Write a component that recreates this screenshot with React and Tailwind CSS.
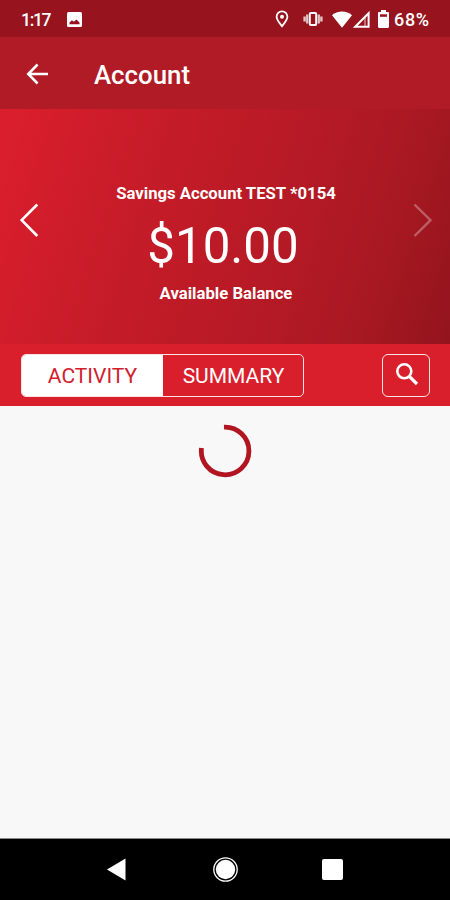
import React, { useState } from "react";

const StatusBar = () => (
  <div className="h-[37px] bg-[#97141e] flex items-center text-white text-[18px] font-medium">
    <span className="w-[32px] ml-[21px] mt-[3px] whitespace-nowrap text-[17.5px] tracking-[-1.3px]">1:17</span>
    <svg className="ml-[14px] mt-[2px]" width="15" height="15" viewBox="0 0 15 15">
      <rect width="15" height="15" rx="1.5" fill="#fff" />
      <path d="M2.5 12.2v-1.8l2.4-2.2 2 1.6 2.6-2.2 3 2.8v1.8z" fill="#97141e" />
    </svg>
    <svg className="ml-[193px] mt-[1px]" width="14" height="18" viewBox="0 0 14 18" fill="none" stroke="#fff">
      <path d="M7 16.2C4 12.5 1.6 9.8 1.6 6.8a5.4 5.4 0 0 1 10.8 0C12.4 9.8 10 12.5 7 16.2z" strokeWidth="1.8" />
      <circle cx="7" cy="6.7" r="2" fill="#fff" stroke="none" />
    </svg>
    <svg className="ml-[14px] mt-[1px]" width="20" height="16" viewBox="0 0 20 16" fill="none" stroke="#fff">
      <rect x="6.8" y="1.9" width="6.4" height="12.2" rx="1" strokeWidth="2" />
      <path d="M4.2 3.5v9M15.8 3.5v9" strokeWidth="2.2" opacity="0.75" />
      <path d="M1.6 5.5v5M18.4 5.5v5" strokeWidth="2.4" opacity="0.75" />
    </svg>
    <svg className="ml-[9px] mt-[1px]" width="20" height="17" viewBox="0 0 20 17">
      <path d="M0 4.2C2.8 1.7 6.2.5 10 .5s7.2 1.2 10 3.7L10 16.8z" fill="#fff" />
    </svg>
    <svg className="ml-[1px] mt-[1px]" width="17" height="17" viewBox="0 0 17 17" fill="none" stroke="#fff">
      <path d="M2.2 15.7L15.6 2.2v13.5z" strokeWidth="2" />
      <path d="M12 6.5v9" strokeWidth="0.8" />
    </svg>
    <svg className="ml-[8px] mt-[1px]" width="11" height="18" viewBox="0 0 11 18">
      <path d="M3 0h5v2h1.8c.7 0 1.2.5 1.2 1.2v13.6c0 .7-.5 1.2-1.2 1.2H1.2C.5 18 0 17.5 0 16.8V3.2C0 2.5.5 2 1.2 2H3z" fill="#fff" />
      <path d="M2 4.3h7v2.500H2z" fill="#97141e" />
    </svg>
    <span className="ml-[5px] mt-[2px] tracking-[0.7px]">68%</span>
  </div>
);

const Header = () => (
  <div className="h-[72px] bg-[#b01b25] flex items-center text-white">
    <svg className="ml-[26px] mt-[2px]" width="22" height="22" viewBox="0 0 22 22" fill="none" stroke="#fff" strokeWidth="2.5">
      <path d="M11.6 1.5L2.2 11l9.4 9.5M2.2 11H22" />
    </svg>
    <h1 className="ml-[46px] mt-[5px] text-[25.8px] leading-none font-medium">Account</h1>
  </div>
);

const Balance = () => (
  <div className="h-[235px] bg-[linear-gradient(108deg,#dc1e2d_0%,#c81c29_28%,#b91a26_55%,#ab1923_78%,#93141d_100%)] flex justify-between px-[20px] text-white">
    <svg className="mt-[94px]" width="19" height="35" viewBox="0 0 19 35" fill="none" stroke="#fff" strokeWidth="2.6">
      <path d="M17.3 1.5L1.7 17.2 17.3 33" />
    </svg>
    <div className="flex flex-col items-center">
      <p className="mt-[76px] text-[16.7px] leading-[18px] font-bold">Savings Account TEST *0154</p>
      <p className="mt-[18px] text-[49.3px] leading-[50px] mr-[6px]">$10.00</p>
      <p className="mt-[14px] text-[16.7px] leading-[18px] font-bold">Available Balance</p>
    </div>
    <svg className="mt-[94px] mr-[-2px] opacity-30" width="19" height="35" viewBox="0 0 19 35" fill="none" stroke="#fff" strokeWidth="2.4">
      <path d="M1.5 1.5l16 15.7-16 15.8" />
    </svg>
  </div>
);

const Tabs = () => {
  const [tab, setTab] = useState("activity");

  return (
    <div className="h-[62px] bg-[#d91f2c] flex items-center justify-between pl-[21px] pr-[20px]">
      <div className="w-[283px] h-[43px] flex border-[1.5px] border-[#ffe3e3] rounded-[5px] overflow-hidden text-[21px]">
        <button
          className={
            tab === "activity"
              ? "w-[141px] pt-[3px] bg-white text-[#d0202d]"
              : "w-[141px] pt-[3px] text-white"
          }
          onClick={() => setTab("activity")}
        >
          ACTIVITY
        </button>
        <button
          className={
            tab === "summary"
              ? "flex-1 pt-[3px] bg-white text-[#d0202d]"
              : "flex-1 pt-[3px] pl-[1px] text-white"
          }
          onClick={() => setTab("summary")}
        >
          SUMMARY
        </button>
      </div>
      <button className="w-[48px] h-[43px] border-[1.5px] border-[#ffe3e3] rounded-[6px] flex items-center justify-center">
        <svg className="mt-[-2px] ml-[2px]" width="24" height="24" viewBox="0 0 24 24" fill="none" stroke="#fff">
          <circle cx="9.3" cy="9.3" r="7" strokeWidth="2.6" />
          <path d="M14.3 14.3l7.7 7.7" strokeWidth="3.2" />
        </svg>
      </button>
    </div>
  );
};

const NavBar = () => (
  <div className="h-[62px] bg-black border-t border-[#8a8a8a] flex items-center">
    <svg className="ml-[107px]" width="19" height="23" viewBox="0 0 19 23">
      <path d="M0 11.5L18.5.5v22z" fill="#fff" />
    </svg>
    <svg className="ml-[87px]" width="25" height="25" viewBox="0 0 25 25">
      <circle cx="12.5" cy="12.5" r="11.7" fill="none" stroke="#fff" strokeWidth="1.3" />
      <circle cx="12.5" cy="12.5" r="9.7" fill="#fff" />
    </svg>
    <div className="ml-[84px] w-[21px] h-[21px] rounded-[2px] bg-white"></div>
  </div>
);

const App = () => {
  return (
    <div className="w-[450px] h-[900px] flex flex-col overflow-hidden bg-[#f8f8f8] font-['Roboto',sans-serif]">
      <StatusBar />
      <Header />
      <Balance />
      <Tabs />
      <div className="flex-1 flex justify-center items-start pt-[18px]">
        <svg width="54" height="54" viewBox="0 0 54 54" fill="none" stroke="#b01520" strokeWidth="4.8">
          <path d="M26 3.2A23.8 23.8 0 1 1 3.5 24" />
        </svg>
      </div>
      <NavBar />
    </div>
  );
};

export default App;
